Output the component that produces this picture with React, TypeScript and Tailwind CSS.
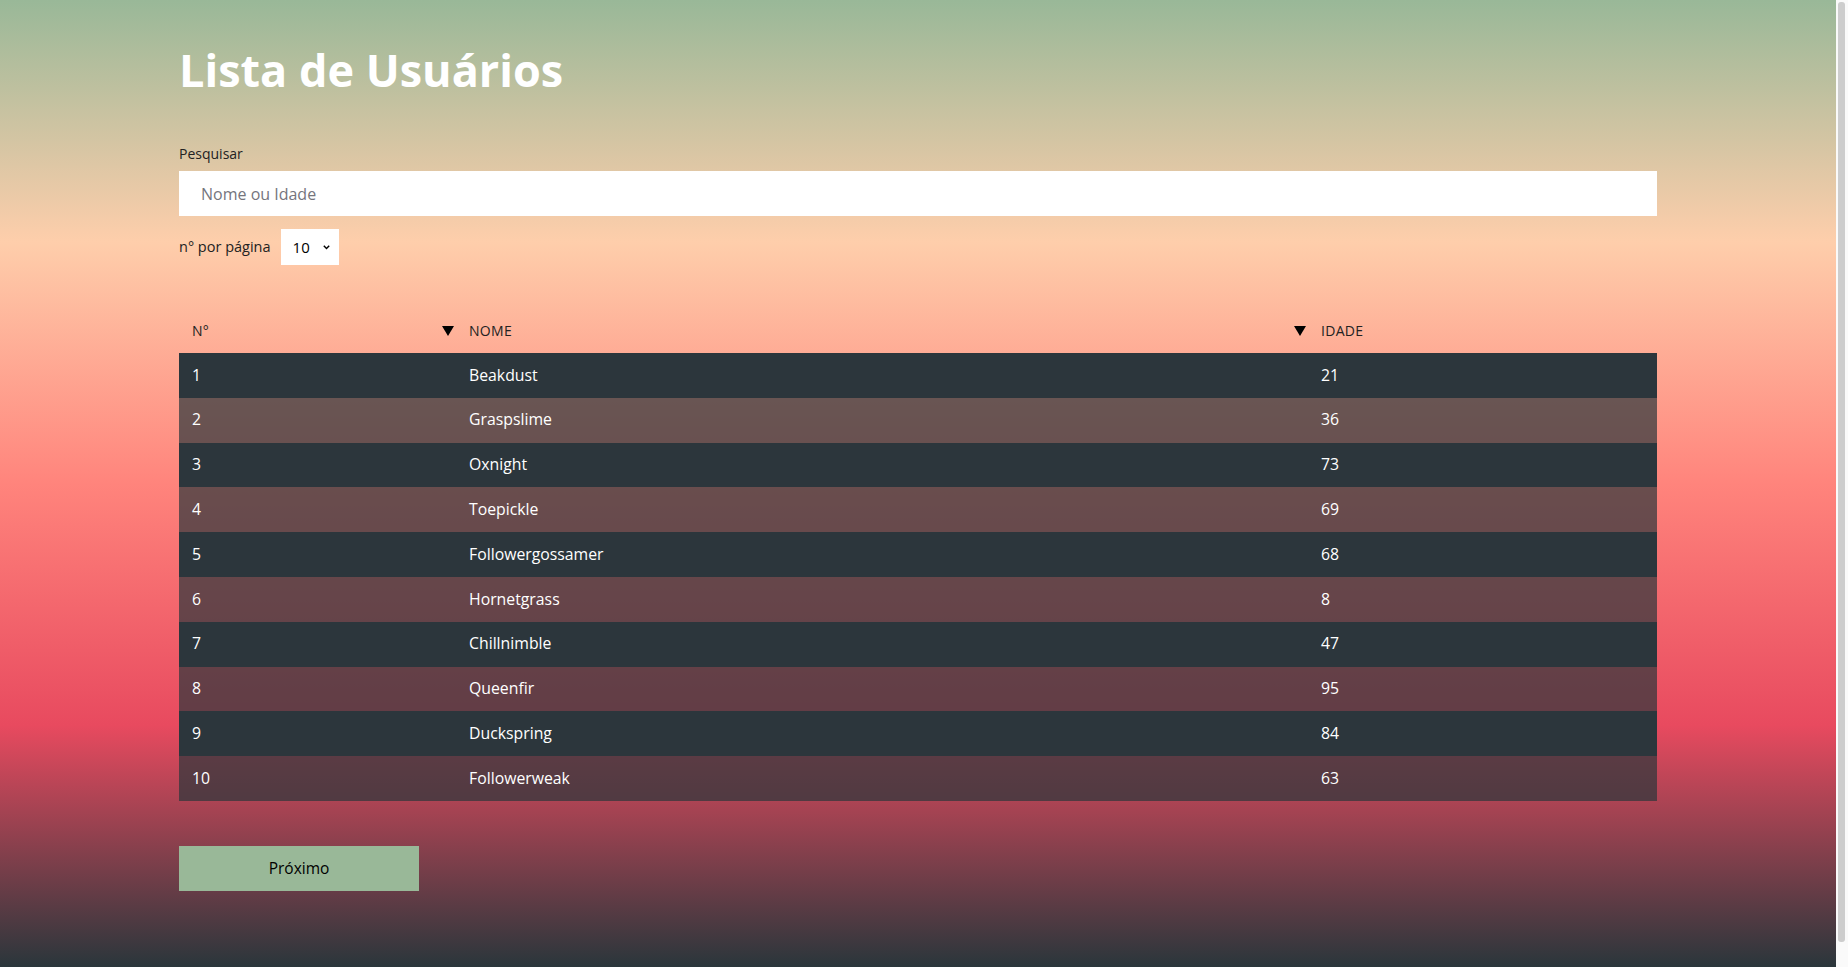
const users = [
  { id: 1, nome: 'Beakdust', idade: 21 },
  { id: 2, nome: 'Graspslime', idade: 36 },
  { id: 3, nome: 'Oxnight', idade: 73 },
  { id: 4, nome: 'Toepickle', idade: 69 },
  { id: 5, nome: 'Followergossamer', idade: 68 },
  { id: 6, nome: 'Hornetgrass', idade: 8 },
  { id: 7, nome: 'Chillnimble', idade: 47 },
  { id: 8, nome: 'Queenfir', idade: 95 },
  { id: 9, nome: 'Duckspring', idade: 84 },
  { id: 10, nome: 'Followerweak', idade: 63 },
]

function SortArrow() {
  return (
    <svg width="12" height="10" viewBox="0 0 12 10" className="shrink-0">
      <path d="M0 0 H12 L6 10 Z" fill="#000" />
    </svg>
  )
}

export default function App() {
  return (
    <div className="flex h-[967px] w-full overflow-hidden font-['Open_Sans',sans-serif]">
      <div className="min-w-0 flex-1 bg-[linear-gradient(#99B898,#FECEAB,#FF847C,#E84A5F,#2A363B)]">
        <div className="mx-auto w-[1478px] pt-[38px] pb-[104px]">
          <h1 className="text-[45px] font-bold leading-[64px] text-white">Lista de Usuários</h1>

          <label className="mt-[42px] block text-[14px] leading-[20px] text-[#222]">Pesquisar</label>
          <input
            type="text"
            placeholder="Nome ou Idade"
            className="mt-[7px] block h-[45px] w-full bg-white px-[22px] text-[16px] outline-none placeholder:text-[#75757d]"
          />

          <div className="mt-[13px] flex items-center gap-[10px]">
            <span className="text-[14.5px] text-[#222]">n° por página</span>
            <div className="flex h-[36px] w-[58px] items-center justify-between bg-white pl-[12px] pr-[8px]">
              <span className="text-[15px] text-black">10</span>
              <svg width="7" height="5" viewBox="0 0 7 5" className="mr-[1px]">
                <path d="M0.8 0.8 L3.5 3.6 L6.2 0.8" stroke="#000" strokeWidth="1.4" fill="none" />
              </svg>
            </div>
          </div>

          <div className="mt-[43px]">
            <div className="flex h-[45px] items-center text-[14px] uppercase tracking-[0.3px] text-[#222]">
              <div className="flex w-[277px] items-center justify-between pl-[13px] pr-[2px]">
                <span>N°</span>
                <SortArrow />
              </div>
              <div className="flex w-[852px] items-center justify-between pl-[13px] pr-[2px]">
                <span>Nome</span>
                <SortArrow />
              </div>
              <div className="w-[349px] pl-[13px]">Idade</div>
            </div>

            {users.map((u, i) => (
              <div
                key={u.id}
                className={
                  'flex h-[44.8px] items-center text-[15.8px] text-white ' +
                  (i % 2 === 0 ? 'bg-[#2c363c]' : 'bg-[rgba(42,54,59,0.7)]')
                }
              >
                <div className="w-[277px] pl-[13px]">{u.id}</div>
                <div className="w-[852px] pl-[13px]">{u.nome}</div>
                <div className="w-[349px] pl-[13px]">{u.idade}</div>
              </div>
            ))}
          </div>

          <button className="mt-[45px] h-[45px] w-[240px] bg-[#99B898] text-[15.5px] text-black">Próximo</button>
        </div>
      </div>

      {/* scrollbar gutter */}
      <div className="w-[12px] shrink-0 bg-[#fafafa] pt-[2px] pl-[2px]">
        <div className="h-[940px] w-[7px] rounded-[3px] bg-[#cdcdcd]" />
      </div>
    </div>
  )
}
